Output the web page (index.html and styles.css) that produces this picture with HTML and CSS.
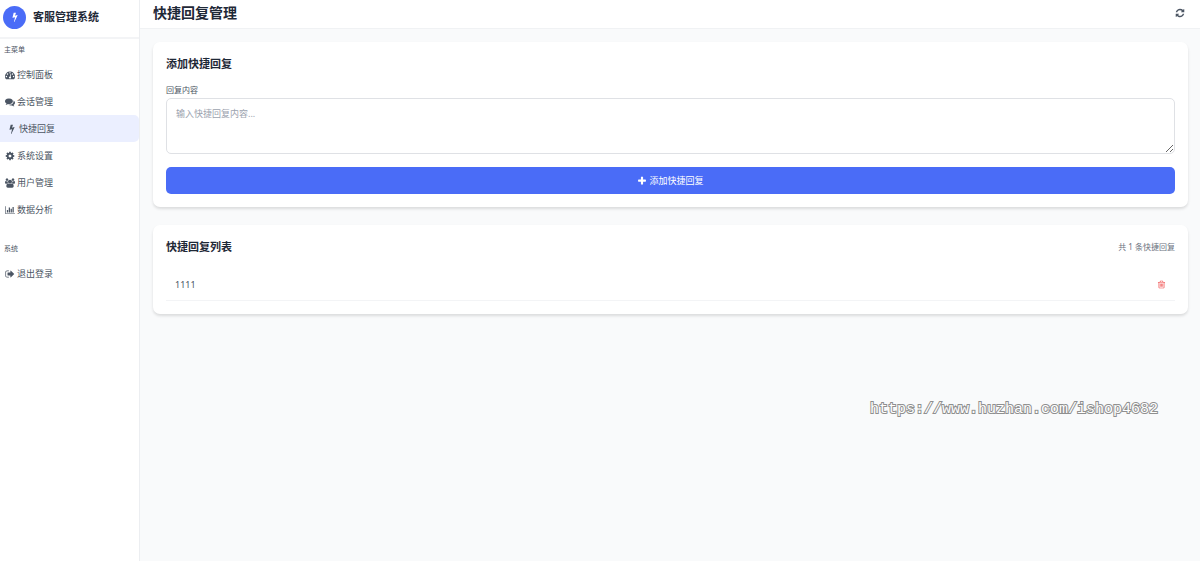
FILE: index.html
```html
<!DOCTYPE html>
<html lang="zh-CN">
<head>
    <meta charset="UTF-8">
    <meta name="viewport" content="width=device-width, initial-scale=1.0">
    <title>快捷回复管理</title>
    <link rel="stylesheet" href="styles.css">
</head>
<body>
    <aside class="sidebar">
        <div class="brand">
            <span class="brand-logo">
                <svg class="icon" viewBox="0 0 1792 1792"><path d="M1333 566q18 20 7 44l-540 1157q-13 25-42 25-4 0-14-2-17-5-25.5-19t-4.5-30l197-808-406 101q-4 1-12 1-18 0-31-11-18-15-13-39l201-825q4-14 16-23t28-9h328q19 0 32 12.5t13 29.5q0 8-5 18l-171 463 396-98q8-2 12-2 19 0 34 15z"/></svg>
            </span>
            <span class="brand-name">客服管理系统</span>
        </div>
        <nav>
            <div class="nav-label">主菜单</div>
            <a href="#" class="nav-item">
                <svg class="icon" viewBox="0 0 1792 1792"><path d="M384 1152q0-53-37.5-90.5t-90.5-37.5-90.5 37.5-37.5 90.5 37.5 90.5 90.5 37.5 90.5-37.5 37.5-90.5zm192-448q0-53-37.5-90.5t-90.5-37.5-90.5 37.5-37.5 90.5 37.5 90.5 90.5 37.5 90.5-37.5 37.5-90.5zm428 481l101-382q6-26-7.5-48.5t-38.5-29.5-48 6.5-30 39.5l-101 382q-60 5-107 43.5t-63 98.5q-20 77 20 146t117 89 146-20 89-117q16-60-6-117t-72-91zm660-33q0-53-37.5-90.5t-90.5-37.5-90.5 37.5-37.5 90.5 37.5 90.5 90.5 37.5 90.5-37.5 37.5-90.5zm-640-640q0-53-37.5-90.5t-90.5-37.5-90.5 37.5-37.5 90.5 37.5 90.5 90.5 37.5 90.5-37.5 37.5-90.5zm448 192q0-53-37.5-90.5t-90.5-37.5-90.5 37.5-37.5 90.5 37.5 90.5 90.5 37.5 90.5-37.5 37.5-90.5zm320 448q0 261-141 483-19 29-54 29h-1402q-35 0-54-29-141-221-141-483 0-182 71-348t191-286 286-191 348-71 348 71 286 191 191 286 71 348z"/></svg>
                控制面板
            </a>
            <a href="#" class="nav-item">
                <svg class="icon" viewBox="0 0 1792 1792"><path d="M1408 768q0 139-94 257t-256.5 186.5-353.5 68.5q-86 0-176-16-124 88-278 128-36 9-86 16h-3q-11 0-20.5-8t-11.5-21q-1-3-1-6.5t.5-6.5 2-6l2.5-5 3.5-5.5 4-5 4.5-5 4-4.5q5-6 23-25t26-29.5 22.5-29 25-38.5 20.5-44q-124-72-195-177t-71-224q0-139 94-257t256.5-186.5 353.5-68.5 353.5 68.5 256.5 186.5 94 257zm384 256q0 120-71 224.5t-195 176.5q10 24 20.5 44t25 38.5 22.5 29 26 29.5 23 25q1 1 4 4.5t4.5 5 4 5 3.5 5.5l2.5 5 2 6 .5 6.5-1 6.5q-3 14-13 22t-22 7q-50-7-86-16-154-40-278-128-90 16-176 16-271 0-472-132 58 4 88 4 161 0 309-45t264-129q125-92 192-212t67-254q0-77-23-152 129 71 204 178t75 230z"/></svg>
                会话管理
            </a>
            <a href="#" class="nav-item active">
                <svg class="icon" viewBox="0 0 1792 1792"><path d="M1333 566q18 20 7 44l-540 1157q-13 25-42 25-4 0-14-2-17-5-25.5-19t-4.5-30l197-808-406 101q-4 1-12 1-18 0-31-11-18-15-13-39l201-825q4-14 16-23t28-9h328q19 0 32 12.5t13 29.5q0 8-5 18l-171 463 396-98q8-2 12-2 19 0 34 15z"/></svg>
                快捷回复
            </a>
            <a href="#" class="nav-item">
                <svg class="icon" viewBox="0 0 1792 1792"><path d="M1152 896q0-106-75-181t-181-75-181 75-75 181 75 181 181 75 181-75 75-181zm512-109v222q0 12-8 23t-20 13l-185 28q-19 54-39 91 35 50 107 138 10 12 10 25t-9 23q-27 37-99 108t-94 71q-12 0-26-9l-138-108q-44 23-91 38-16 136-29 186-7 28-36 28h-222q-14 0-24.5-8.5t-11.5-21.5l-28-184q-49-16-90-37l-141 107q-10 9-25 9-14 0-25-11-126-114-165-168-7-10-7-23 0-12 8-23 15-21 51-66.5t54-70.5q-27-50-41-99l-183-27q-13-2-21-12.5t-8-23.5v-222q0-12 8-23t19-13l186-28q14-46 39-92-40-57-107-138-10-12-10-24 0-10 9-23 26-36 98.5-107.5t94.5-71.5q13 0 26 10l138 107q44-23 91-38 16-136 29-186 7-28 36-28h222q14 0 24.5 8.5t11.5 21.5l28 184q49 16 90 37l142-107q9-9 24-9 13 0 25 10 129 119 165 170 7 8 7 22 0 12-8 23-15 21-51 66.5t-54 70.5q26 50 41 98l183 28q13 2 21 12.5t8 23.5z"/></svg>
                系统设置
            </a>
            <a href="#" class="nav-item">
                <svg class="icon" viewBox="0 0 1920 1792"><path d="M593 896q-162 5-265 128h-134q-82 0-138-40.5t-56-118.5q0-353 124-353 6 0 43.5 21t97.5 42.5 119 21.5q67 0 133-23-5 37-5 66 0 139 81 256zm1071 637q0 120-73 189.5t-194 69.5h-874q-121 0-194-69.5t-73-189.5q0-53 3.5-103.5t14-109 26.5-108.5 43-97.5 62-81 85.5-53.5 111.5-20q10 0 43 21.5t73 48 107 48 135 21.5 135-21.5 107-48 73-48 43-21.5q61 0 111.5 20t85.5 53.5 62 81 43 97.5 26.5 108.5 14 109 3.5 103.5zm-1024-1277q0 106-75 181t-181 75-181-75-75-181 75-181 181-75 181 75 75 181zm704 384q0 159-112.5 271.5t-271.5 112.5-271.5-112.5-112.5-271.5 112.5-271.5 271.5-112.5 271.5 112.5 112.5 271.5zm576 225q0 78-56 118.5t-138 40.5h-134q-103-123-265-128 81-117 81-256 0-29-5-66 66 23 133 23 59 0 119-21.5t97.5-42.5 43.5-21q124 0 124 353zm-128-609q0 106-75 181t-181 75-181-75-75-181 75-181 181-75 181 75 75 181z"/></svg>
                用户管理
            </a>
            <a href="#" class="nav-item">
                <svg class="icon" viewBox="0 0 2048 1792"><path d="M640 896v512h-256v-512h256zm384-512v1024h-256v-1024h256zm1024 1152v128h-2048v-1536h128v1408h1920zm-640-896v768h-256v-768h256zm384-384v1152h-256v-1152h256z"/></svg>
                数据分析
            </a>
            <div class="nav-label nav-label-system">系统</div>
            <a href="#" class="nav-item">
                <svg class="icon" viewBox="0 0 1792 1792"><path d="M704 1440q0 4 1 20t.5 26.5-3 23.5-10 19.5-20.5 6.5h-320q-119 0-203.5-84.5t-84.5-203.5v-704q0-119 84.5-203.5t203.5-84.5h320q13 0 22.5 9.5t9.5 22.5q0 4 1 20t.5 26.5-3 23.5-10 19.5-20.5 6.5h-320q-66 0-113 47t-47 113v704q0 66 47 113t113 47h312l11.5 1 11.5 3 8 5.5 7 9 2 13.5zm928-544q0 26-19 45l-544 544q-19 19-45 19t-45-19-19-45v-288h-448q-26 0-45-19t-19-45v-384q0-26 19-45t45-19h448v-288q0-26 19-45t45-19 45 19l544 544q19 19 19 45z"/></svg>
                退出登录
            </a>
        </nav>
    </aside>

    <div class="main">
        <header class="topbar">
            <h1>快捷回复管理</h1>
            <button type="button" class="icon-btn" aria-label="刷新">
                <svg class="icon" viewBox="0 0 1792 1792"><path d="M1639 1056q0 5-1 7-64 268-268 434.5t-478 166.5q-146 0-282.5-55t-243.5-157l-129 129q-19 19-45 19t-45-19-19-45v-448q0-26 19-45t45-19h448q26 0 45 19t19 45-19 45l-137 137q71 66 161 102t187 36q134 0 250-65t186-179q11-17 53-117 8-23 30-23h192q13 0 22.5 9.5t9.5 22.5zm25-800v448q0 26-19 45t-45 19h-448q-26 0-45-19t-19-45 19-45l138-138q-148-137-349-137-134 0-250 65t-186 179q-11 17-53 117-8 23-30 23h-199q-13 0-22.5-9.5t-9.5-22.5v-7q65-268 270-434.5t480-166.5q146 0 284 55.5t245 156.5l130-129q19-19 45-19t45 19 19 45z"/></svg>
            </button>
        </header>

        <main class="content">
            <section class="card">
                <h2>添加快捷回复</h2>
                <form class="reply-form">
                    <label for="reply-content">回复内容</label>
                    <textarea id="reply-content" placeholder="输入快捷回复内容..."></textarea>
                    <button type="button" class="submit-btn">
                        <svg class="icon" viewBox="0 0 1792 1792"><path d="M1600 736v192q0 40-28 68t-68 28h-416v416q0 40-28 68t-68 28h-192q-40 0-68-28t-28-68v-416h-416q-40 0-68-28t-28-68v-192q0-40 28-68t68-28h416v-416q0-40 28-68t68-28h192q40 0 68 28t28 68v416h416q40 0 68 28t28 68z"/></svg>
                        添加快捷回复
                    </button>
                </form>
            </section>

            <section class="card">
                <div class="card-head">
                    <h2>快捷回复列表</h2>
                    <span class="count">共 1 条快捷回复</span>
                </div>
                <ul class="reply-list">
                    <li>
                        <span>1111</span>
                        <button type="button" class="icon-btn delete" aria-label="删除">
                            <svg class="icon" viewBox="0 0 1792 1792"><path d="M704 736v576q0 14-9 23t-23 9h-64q-14 0-23-9t-9-23v-576q0-14 9-23t23-9h64q14 0 23 9t9 23zm256 0v576q0 14-9 23t-23 9h-64q-14 0-23-9t-9-23v-576q0-14 9-23t23-9h64q14 0 23 9t9 23zm256 0v576q0 14-9 23t-23 9h-64q-14 0-23-9t-9-23v-576q0-14 9-23t23-9h64q14 0 23 9t9 23zm128 724v-948h-896v948q0 22 7 40.5t14.5 27 10.5 8.5h832q3 0 10.5-8.5t14.5-27 7-40.5zm-672-1076h448l-48-117q-7-9-17-11h-317q-10 2-17 11zm928 32v64q0 14-9 23t-23 9h-96v948q0 83-47 143.5t-113 60.5h-832q-66 0-113-58.5t-47-141.5v-952h-96q-14 0-23-9t-9-23v-64q0-14 9-23t23-9h309l70-167q15-37 54-63t79-26h320q40 0 79 26t54 63l70 167h309q14 0 23 9t9 23z"/></svg>
                        </button>
                    </li>
                </ul>
            </section>
        </main>
    </div>

    <div class="watermark">https://www.huzhan.com/ishop4682</div>
</body>
</html>
```

FILE: styles.css
```css
* {
    box-sizing: border-box;
}

body {
    display: flex;
    min-height: 100vh;
    margin: 0;
    background-color: #f9fafb;
    color: #4b5563;
    font-family: "Noto Sans", "Noto Sans CJK SC", sans-serif;
    font-size: 9px;
    line-height: 14px;
}

h1, h2 {
    margin: 0;
    color: #1f2937;
    font-weight: 700;
}

h1 {
    font-size: 14px;
    line-height: 20px;
}

h2 {
    font-size: 11px;
    line-height: 18px;
}

button, textarea {
    font: inherit;
}

.icon {
    display: block;
    flex: none;
    width: 10px;
    height: 10px;
    fill: currentColor;
}

/* sidebar */
.sidebar {
    flex: none;
    width: 140px;
    background-color: #fff;
    border-right: 1px solid #eceef1;
}

.brand {
    display: flex;
    align-items: center;
    gap: 7px;
    height: 39px;
    padding: 0 3px 3px;
    border-bottom: 2px solid #f3f4f6;
}

.brand-logo {
    display: flex;
    align-items: center;
    justify-content: center;
    width: 23px;
    height: 23px;
    border-radius: 50%;
    background-color: #4a6cf7;
    color: #fff;
}

.brand-name {
    color: #1f2937;
    font-size: 11px;
    font-weight: 700;
}

.nav-label {
    padding: 6px 4px;
    color: #4b5563;
    font-size: 7px;
    line-height: 10px;
}

.nav-label-system {
    margin-top: 15px;
}

.nav-item {
    display: flex;
    align-items: center;
    gap: 2px;
    height: 27px;
    padding-left: 5px;
    color: #4b5563;
    text-decoration: none;
}

.nav-item.active {
    padding-left: 7px;
    border-radius: 0 5px 5px 0;
    background-color: #ebefff;
}

/* main area */
.main {
    flex: 1;
    min-width: 0;
}

.topbar {
    display: flex;
    align-items: center;
    justify-content: space-between;
    height: 29px;
    padding: 0 15px 2px 13px;
    background-color: #fff;
    border-bottom: 1px solid #f0f2f4;
}

.icon-btn {
    padding: 0;
    border: 0;
    background: none;
    color: #4b5563;
    cursor: pointer;
}

.content {
    display: flex;
    flex-direction: column;
    gap: 18px;
    padding: 13px 12px 13px 13px;
}

.card {
    padding: 13px;
    border-radius: 7px;
    background-color: #fff;
    box-shadow: 0 2px 3px rgba(0, 0, 0, 0.12);
}

.reply-form {
    display: flex;
    flex-direction: column;
    margin-top: 11px;
}

.reply-form label {
    font-size: 8px;
    line-height: 12px;
}

.reply-form textarea {
    height: 56px;
    margin: 2px 0 13px;
    padding: 8px 9px;
    border: 1px solid #dfe1e5;
    border-radius: 5px;
    background-color: #fff;
    color: #4b5563;
    resize: vertical;
}

.reply-form textarea::placeholder {
    color: #9ca3af;
}

.submit-btn {
    display: flex;
    align-items: center;
    justify-content: center;
    gap: 2px;
    height: 27px;
    padding: 0;
    border: 0;
    border-radius: 5px;
    background-color: #4a6cf7;
    color: #fff;
    cursor: pointer;
}

.card-head {
    display: flex;
    align-items: center;
    justify-content: space-between;
}

.count {
    color: #6b7280;
    font-size: 8px;
}

.reply-list {
    margin: 13px 0 0;
    padding: 0;
    list-style: none;
}

.reply-list li {
    display: flex;
    align-items: center;
    justify-content: space-between;
    height: 32px;
    padding: 0 9px;
    border-bottom: 1px solid #f3f4f6;
}

.delete {
    color: #ef4444;
}

.delete .icon {
    width: 9px;
    height: 9px;
}

/* site address printed over the page */
.watermark {
    position: absolute;
    top: 400px;
    right: 42px;
    color: #fff;
    font-family: "Liberation Mono", monospace;
    font-size: 15px;
    line-height: 20px;
    -webkit-text-stroke: 2px #8f8f8f;
    paint-order: stroke fill;
    pointer-events: none;
}
```
